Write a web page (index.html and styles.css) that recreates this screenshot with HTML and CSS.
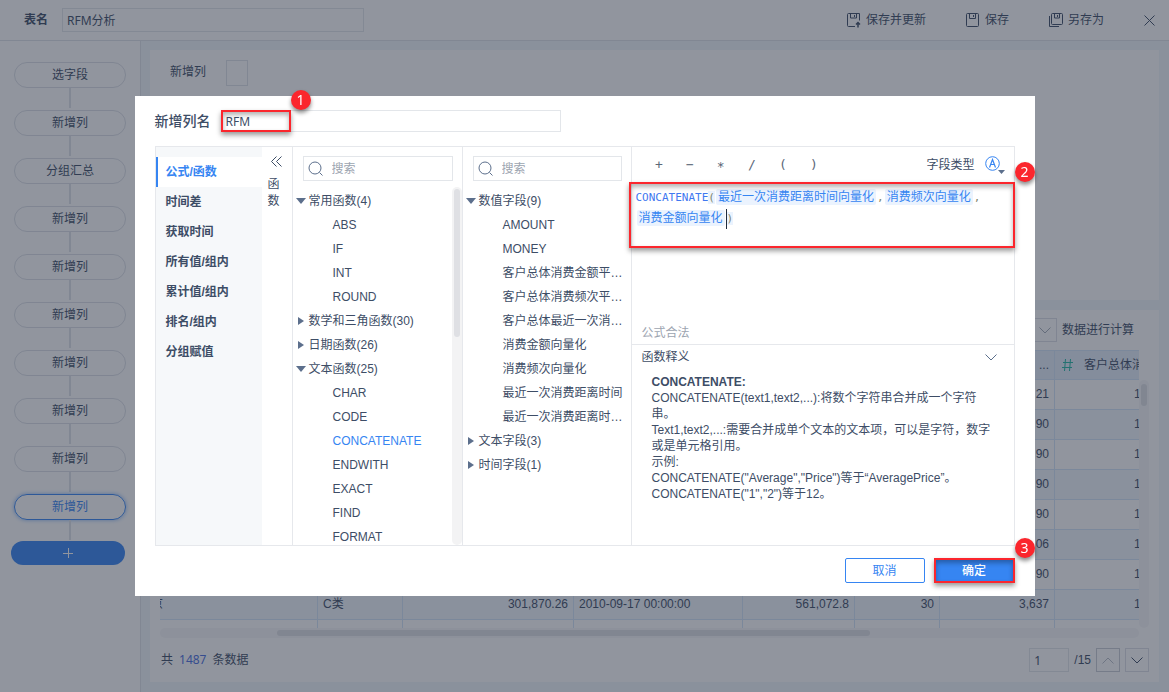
FILE: index.html
```html
<!DOCTYPE html>
<html lang="zh-CN">
<head>
    <meta charset="UTF-8">
    <meta name="viewport" content="width=device-width, initial-scale=1.0">
    <title>RFM分析</title>
    <link rel="stylesheet" href="styles.css">
</head>
<body>

<div class="app">
    <header class="topbar">
        <label class="topbar-label" for="tableName">表名</label>
        <input class="text-input table-name" type="text" id="tableName" value="RFM分析">
        <div class="topbar-actions">
            <button class="action" type="button">
                <svg width="14" height="15" viewBox="0 0 14 15" fill="none" stroke="currentColor"><path d="M8 13.500H1.500a1 1 0 0 1-1-1V1.500a1 1 0 0 1 1-1h11v7M3.500 .5v4.500h6V.5M7.500 2v2"/><path d="M11 14.500V10M9 11.500l2-2 2 2" stroke-width="1.500"/></svg>
                保存并更新
            </button>
            <button class="action" type="button">
                <svg width="14" height="15" viewBox="0 0 14 15" fill="none" stroke="currentColor"><rect x=".5" y=".5" width="12" height="13" rx="1"/><path d="M3.500 .5v5h6v-5M7.500 2v2"/></svg>
                保存
            </button>
            <button class="action" type="button">
                <svg width="14" height="15" viewBox="0 0 14 15" fill="none" stroke="currentColor"><rect x="2.500" y=".5" width="11" height="11" rx="1"/><path d="M5.500 .5v4.500h5V.5M8.500 2v2M.5 3v10.500H10"/></svg>
                另存为
            </button>
            <button class="action" type="button" aria-label="关闭">
                <svg width="11" height="11" viewBox="0 0 11 11" fill="none" stroke="currentColor"><path d="M.5 .5l10 10M10.500 .5l-10 10"/></svg>
            </button>
        </div>
    </header>

    <div class="workspace">
        <nav class="steps">
            <button class="step" type="button">选字段</button>
            <button class="step" type="button">新增列</button>
            <button class="step" type="button">分组汇总</button>
            <button class="step" type="button">新增列</button>
            <button class="step" type="button">新增列</button>
            <button class="step" type="button">新增列</button>
            <button class="step" type="button">新增列</button>
            <button class="step" type="button">新增列</button>
            <button class="step" type="button">新增列</button>
            <button class="step active" type="button">新增列</button>
            <button class="step-add" type="button" aria-label="添加">
                <svg width="10" height="10" viewBox="0 0 10 10" fill="none" stroke="currentColor"><path d="M5.500 0v10M0 5.500h10"/></svg>
            </button>
        </nav>

        <main class="content">
            <section class="panel column-panel">
                <span>新增列</span>
                <button class="column-box" type="button" aria-label="新增列"></button>
            </section>

            <section class="panel data-panel">
                <div class="data-toolbar">
                    <button class="row-count" type="button" aria-label="行数">
                        <svg width="12" height="7" viewBox="0 0 12 7" fill="none" stroke="currentColor"><path d="M.5 .5L6 6l5.500-5.500"/></svg>
                    </button>
                    <span>数据进行计算</span>
                </div>
                <div class="table-area">
                    <div class="table-view">
                        <table class="data-table">
                            <colgroup>
                                <col class="w-name"><col class="w-short"><col class="w-long"><col class="w-date"><col class="w-amount"><col class="w-short"><col class="w-total"><col class="w-last">
                            </colgroup>
                            <thead>
                                <tr><th></th><th></th><th></th><th></th><th></th><th></th><th class="num">...</th><th class="last"><svg width="11" height="12" viewBox="0 0 11 12" fill="none" stroke="currentColor"><path d="M3.500 0l-1 12M8.500 0l-1 12M1 3.500h10M0 8.500h10"/></svg>客户总体消费</th></tr>
                            </thead>
                            <tbody>
                                <tr><td></td><td></td><td></td><td></td><td></td><td></td><td class="num">21</td><td class="last">1</td></tr>
                                <tr><td></td><td></td><td></td><td></td><td></td><td></td><td class="num">90</td><td class="last">1</td></tr>
                                <tr><td></td><td></td><td></td><td></td><td></td><td></td><td class="num">90</td><td class="last">1</td></tr>
                                <tr><td></td><td></td><td></td><td></td><td></td><td></td><td class="num">90</td><td class="last">1</td></tr>
                                <tr><td></td><td></td><td></td><td></td><td></td><td></td><td class="num">90</td><td class="last">1</td></tr>
                                <tr><td></td><td></td><td></td><td></td><td></td><td></td><td class="num">06</td><td class="last">1</td></tr>
                                <tr><td></td><td></td><td></td><td></td><td></td><td></td><td class="num">90</td><td class="last">1</td></tr>
                                <tr><td class="cut">京</td><td>C类</td><td class="num">301,870.26</td><td>2010-09-17 00:00:00</td><td class="num">561,072.8</td><td class="num">30</td><td class="num">3,637</td><td class="last">1</td></tr>
                                <tr><td></td><td></td><td></td><td></td><td></td><td></td><td></td><td></td></tr>
                            </tbody>
                        </table>
                    </div>
                    <div class="scroll-y"><div class="thumb"></div></div>
                </div>
                <div class="scroll-x"><div class="thumb"></div></div>
                <div class="data-footer">
                    <p class="total">共<b>1487</b>条数据</p>
                    <input class="text-input page-input" type="text" value="1" aria-label="页码">
                    <span class="page-total">/15</span>
                    <button class="page-btn prev" type="button" aria-label="上一页">
                        <svg width="12" height="7" viewBox="0 0 12 7" fill="none" stroke="currentColor"><path d="M.5 6.500L6 1l5.500 5.500"/></svg>
                    </button>
                    <button class="page-btn" type="button" aria-label="下一页">
                        <svg width="12" height="7" viewBox="0 0 12 7" fill="none" stroke="currentColor"><path d="M.5 .5L6 6l5.500-5.500"/></svg>
                    </button>
                </div>
            </section>
        </main>
    </div>
</div>

<!-- Formula dialog -->
<div class="overlay">
    <div class="dialog" role="dialog" aria-modal="true">
        <div class="dialog-head">
            <label for="columnName">新增列名</label>
            <div class="name-field">
                <input class="text-input" type="text" id="columnName" value="RFM">
                <div class="mark mark-name"><span class="badge">1</span></div>
            </div>
        </div>

        <div class="dialog-body">
            <div class="tabs">
                <button class="tab active" type="button">公式/函数</button>
                <button class="tab" type="button">时间差</button>
                <button class="tab" type="button">获取时间</button>
                <button class="tab" type="button">所有值/组内</button>
                <button class="tab" type="button">累计值/组内</button>
                <button class="tab" type="button">排名/组内</button>
                <button class="tab" type="button">分组赋值</button>
            </div>

            <button class="collapse" type="button">
                <svg width="11" height="11" viewBox="0 0 11 11" fill="none" stroke="currentColor"><path d="M5.500 .5l-5 5 5 5M10.500 .5l-5 5 5 5"/></svg>
                <span>函数</span>
            </button>

            <div class="picker">
                <div class="search">
                    <svg width="16" height="16" viewBox="0 0 16 16" fill="none" stroke="currentColor"><circle cx="7" cy="7" r="6"/><path d="M11.500 11.500l3 3"/></svg>
                    <input type="text" placeholder="搜索" aria-label="搜索函数">
                </div>
                <div class="tree-area">
                    <ul class="tree">
                        <li><button class="group open" type="button">常用函数(4)</button></li>
                        <li><button class="leaf" type="button">ABS</button></li>
                        <li><button class="leaf" type="button">IF</button></li>
                        <li><button class="leaf" type="button">INT</button></li>
                        <li><button class="leaf" type="button">ROUND</button></li>
                        <li><button class="group" type="button">数学和三角函数(30)</button></li>
                        <li><button class="group" type="button">日期函数(26)</button></li>
                        <li><button class="group open" type="button">文本函数(25)</button></li>
                        <li><button class="leaf" type="button">CHAR</button></li>
                        <li><button class="leaf" type="button">CODE</button></li>
                        <li><button class="leaf selected" type="button">CONCATENATE</button></li>
                        <li><button class="leaf" type="button">ENDWITH</button></li>
                        <li><button class="leaf" type="button">EXACT</button></li>
                        <li><button class="leaf" type="button">FIND</button></li>
                        <li><button class="leaf" type="button">FORMAT</button></li>
                    </ul>
                    <div class="tree-scroll"><div class="thumb"></div></div>
                </div>
            </div>

            <div class="picker fields">
                <div class="search">
                    <svg width="16" height="16" viewBox="0 0 16 16" fill="none" stroke="currentColor"><circle cx="7" cy="7" r="6"/><path d="M11.500 11.500l3 3"/></svg>
                    <input type="text" placeholder="搜索" aria-label="搜索字段">
                </div>
                <div class="tree-area">
                    <ul class="tree">
                        <li><button class="group open" type="button">数值字段(9)</button></li>
                        <li><button class="leaf" type="button">AMOUNT</button></li>
                        <li><button class="leaf" type="button">MONEY</button></li>
                        <li><button class="leaf" type="button">客户总体消费金额平均值</button></li>
                        <li><button class="leaf" type="button">客户总体消费频次平均值</button></li>
                        <li><button class="leaf" type="button">客户总体最近一次消费距离</button></li>
                        <li><button class="leaf" type="button">消费金额向量化</button></li>
                        <li><button class="leaf" type="button">消费频次向量化</button></li>
                        <li><button class="leaf" type="button">最近一次消费距离时间</button></li>
                        <li><button class="leaf" type="button">最近一次消费距离时间向量化</button></li>
                        <li><button class="group" type="button">文本字段(3)</button></li>
                        <li><button class="group" type="button">时间字段(1)</button></li>
                    </ul>
                </div>
            </div>

            <div class="formula">
                <div class="operators">
                    <button class="op" type="button">+</button>
                    <button class="op" type="button">−</button>
                    <button class="op" type="button">∗</button>
                    <button class="op" type="button">/</button>
                    <button class="op" type="button">(</button>
                    <button class="op" type="button">)</button>
                    <span class="type-label">字段类型</span>
                    <button class="type-btn" type="button" aria-label="字段类型">
                        <svg width="20" height="18" viewBox="0 0 20 18" fill="none"><circle cx="7.500" cy="7.500" r="6.800" stroke="#3685f2"/><path d="M4.500 11.500l3-8 3 8M5.500 8.500h4" stroke="#3685f2" stroke-width="1.200"/><path d="M13 14h7l-3.500 4z" fill="#5c6f8c"/></svg>
                    </button>
                </div>
                <div class="editor-area">
                    <div class="editor" role="textbox" contenteditable="true" spellcheck="false"><span class="fn">CONCATENATE</span><span class="paren">(</span><span class="chip">最近一次消费距离时间向量化</span><span class="comma">,</span><span class="chip">消费频次向量化</span><span class="comma">,</span><br><span class="chip">消费金额向量化</span><span class="caret"></span><span class="paren">)</span></div>
                    <div class="mark mark-editor"><span class="badge">2</span></div>
                </div>
                <p class="status">公式合法</p>
                <div class="help">
                    <button class="help-head" type="button">
                        函数释义
                        <svg width="12" height="7" viewBox="0 0 12 7" fill="none" stroke="currentColor"><path d="M.5 .5L6 6l5.500-5.500"/></svg>
                    </button>
                    <div class="help-text">
                        <b>CONCATENATE:</b>
                        <p>CONCATENATE(text1,text2,...):将数个字符串合并成一个字符串。</p>
                        <p>Text1,text2,...:需要合并成单个文本的文本项，可以是字符，数字或是单元格引用。</p>
                        <p>示例:</p>
                        <p>CONCATENATE("Average","Price")等于“AveragePrice”。</p>
                        <p>CONCATENATE("1","2")等于12。</p>
                    </div>
                </div>
            </div>
        </div>

        <div class="dialog-foot">
            <button class="btn" type="button">取消</button>
            <div class="confirm">
                <button class="btn primary" type="button">确定</button>
                <div class="mark mark-ok"><span class="badge">3</span></div>
            </div>
        </div>
    </div>
</div>

</body>
</html>
```
FILE: styles.css
```css
* {
    box-sizing: border-box;
}
body {
    margin: 0;
    font-family: "Liberation Sans", "Noto Sans CJK SC", sans-serif;
    font-size: 12px;
    line-height: 16px;
    color: #3d4d66;
    overflow: hidden;
}
button, input {
    font: inherit;
    color: inherit;
    margin: 0;
    padding: 0;
    border: none;
    border-radius: 0;
    background: none;
    outline: none;
}
button {
    cursor: pointer;
}
svg {
    display: block;
    flex: none;
}
p, ul {
    margin: 0;
    padding: 0;
    list-style: none;
}
.text-input {
    border: 1px solid #e3e6ea;
    padding: 0 4px;
    font-family: "Noto Sans", "Noto Sans CJK SC", sans-serif;
}

/* Page */
.app {
    height: 100vh;
    display: flex;
    flex-direction: column;
}
.topbar {
    display: flex;
    align-items: center;
    height: 41px;
    padding: 0 14px 0 24px;
    border-bottom: 1px solid #dfe3e8;
}
.topbar-label {
    font-weight: bold;
}
.table-name {
    width: 302px;
    height: 24px;
    margin-left: 14px;
}
.topbar-actions {
    display: flex;
    gap: 40px;
    margin-left: auto;
}
.action {
    display: flex;
    align-items: center;
    gap: 5px;
}
.workspace {
    flex: 1;
    display: flex;
    min-height: 0;
}
.steps {
    flex: none;
    width: 141px;
    padding-top: 21px;
    border-right: 1px solid #dfe3e8;
    display: flex;
    flex-direction: column;
    align-items: center;
}
.step {
    width: 112px;
    height: 26px;
    border: 1px solid #dcdfe6;
    border-radius: 13px;
}
.step::after {
    content: "";
    display: block;
    width: 2px;
    height: 20px;
    margin: 5px auto -25px;
    background: #dfe2e8;
}
.step + .step {
    margin-top: 22px;
}
.step.active {
    border-color: #3685f2;
    color: #3685f2;
    box-shadow: 0 0 4px rgba(54, 133, 242, 0.6);
}
.step-add {
    display: flex;
    align-items: center;
    justify-content: center;
    width: 114px;
    height: 24px;
    margin: 21px 4px 0 0;
    border-radius: 12px;
    background: #3685f2;
    color: #fff;
}
.content {
    flex: 1;
    min-width: 0;
    display: flex;
    flex-direction: column;
    gap: 10px;
    padding: 9px 10px 10px 9px;
    background: #f0f6fb;
}
.panel {
    background: #fff;
}
.column-panel {
    height: 250px;
    padding: 10px 20px;
    display: flex;
    align-items: flex-start;
    gap: 20px;
    line-height: 24px;
}
.column-box {
    width: 22px;
    height: 26px;
    border: 1px solid #dfe3e8;
}
.data-panel {
    flex: 1;
    min-height: 0;
    display: flex;
    flex-direction: column;
    padding: 8px 10px 10px;
}
.data-toolbar {
    display: flex;
    align-items: center;
    justify-content: flex-end;
    gap: 5px;
    padding-right: 15px;
    margin-bottom: 8px;
}
.row-count {
    display: flex;
    align-items: center;
    justify-content: flex-end;
    width: 80px;
    height: 24px;
    padding-right: 5px;
    border: 1px solid #dcdfe6;
    color: #a5adb9;
}
.table-area {
    flex: 1;
    min-height: 0;
    display: flex;
}
.table-view {
    flex: 1;
    min-width: 0;
    overflow: hidden;
}
.data-table {
    width: 1100px;
    table-layout: fixed;
    border-collapse: separate;
    border-spacing: 0;
}
.w-name { width: 158px; }
.w-short { width: 85px; }
.w-long { width: 171px; }
.w-date { width: 169px; }
.w-amount { width: 112px; }
.w-total { width: 115px; }
.data-table th, .data-table td {
    height: 30px;
    padding: 0 5px 2px;
    border-right: 1px solid #d3e4f8;
    border-bottom: 1px solid #d3e4f8;
    text-align: left;
    font-weight: normal;
    white-space: nowrap;
    overflow: hidden;
}
.data-table th {
    padding-bottom: 0;
    background: #e4eefb;
    border-top: 1px solid #d3e4f8;
}
.data-table tr:nth-child(even) td {
    background: #f0f6fd;
}
.data-table .num {
    text-align: right;
}
.data-table .cut {
    text-indent: -14px;
}
.data-table td.last {
    padding-left: 79px;
}
.data-table th.last {
    padding-left: 29px;
}
.data-table th svg {
    float: left;
    margin: 2px 0 0 -22px;
    color: #25b8a5;
}
.thumb {
    border-radius: 3px;
    background: #dfe0e4;
}
.scroll-y {
    width: 10px;
    margin-top: 30px;
    padding: 4px 2px;
    border-radius: 5px;
    background: #f7f7f8;
}
.scroll-y .thumb {
    height: 22px;
}
.scroll-x {
    height: 10px;
    margin-right: 10px;
    padding: 2px 0;
    border-radius: 5px;
    background: #f7f7f8;
}
.scroll-x .thumb {
    width: 60.5%;
    height: 6px;
    margin-left: 12%;
}
.data-footer {
    display: flex;
    align-items: center;
    margin-top: 10px;
}
.total {
    margin-right: auto;
    padding-left: 1px;
    font-family: "Noto Sans", "Noto Sans CJK SC", sans-serif;
}
.total b {
    margin: 0 6px;
    font-weight: normal;
    color: #4a6fe0;
}
.page-input {
    width: 40px;
    height: 24px;
}
.page-total {
    margin: 0 5px;
}
.page-btn {
    display: flex;
    align-items: center;
    justify-content: center;
    width: 24px;
    height: 24px;
    border: 1px solid #dcdfe6;
}
.page-btn.prev {
    margin-right: 5px;
    border-color: #c8ccd4;
    color: #b8bec8;
}

/* Dialog */
.overlay {
    position: fixed;
    inset: 0;
    display: flex;
    align-items: center;
    justify-content: center;
    background: rgba(35, 43, 61, 0.5);
}
.dialog {
    width: 900px;
    height: 500px;
    padding: 14px 20px 13px;
    display: flex;
    flex-direction: column;
    background: #fff;
}
.dialog-head {
    display: flex;
    align-items: center;
    gap: 10px;
    margin-bottom: 14px;
    font-size: 14px;
}
.dialog-head label {
    font-weight: 500;
}
.name-field {
    position: relative;
    width: 340px;
    font-size: 12px;
}
.name-field .text-input {
    display: block;
    width: 100%;
    height: 22px;
}
.dialog-body {
    flex: 1;
    min-height: 0;
    display: flex;
    border: 1px solid #e6e8ec;
}
.tabs {
    width: 106px;
    padding-top: 10px;
    background: #f6f8fa;
}
.tab {
    display: block;
    width: 100%;
    height: 30px;
    padding-left: 8px;
    border-left: 2px solid transparent;
    text-align: left;
    font-weight: bold;
}
.tab.active {
    border-color: #3685f2;
    background: #fff;
    color: #3685f2;
}
.collapse {
    width: 30px;
    padding: 9px 10px 0 6px;
    display: flex;
    flex-direction: column;
    align-items: flex-end;
    gap: 9px;
}
.collapse span {
    width: 12px;
    margin-right: 2px;
    line-height: 17px;
}
.picker {
    width: 170px;
    border-left: 1px solid #e6e8ec;
    display: flex;
    flex-direction: column;
}
.picker.fields {
    width: 169px;
}
.search {
    display: flex;
    align-items: center;
    gap: 8px;
    height: 25px;
    margin: 9px 9px 6px 10px;
    padding: 0 4px;
    border: 1px solid #e3e6ea;
    color: #5c6f8c;
}
.search input {
    flex: 1;
    min-width: 0;
}
.search input::placeholder {
    color: #9ca4b0;
}
.tree-area {
    flex: 1;
    min-height: 0;
    display: flex;
}
.tree {
    flex: 1;
    min-width: 0;
    padding-top: 2px;
    overflow: hidden;
}
.fields .tree {
    margin-right: 7px;
}
.tree button {
    display: block;
    width: 100%;
    height: 24px;
    text-align: left;
    white-space: nowrap;
    overflow: hidden;
    text-overflow: ellipsis;
}
.tree .group::before {
    content: "";
    display: inline-block;
    margin: 0 5px 0 5px;
    border: 4px solid transparent;
    border-left: 6px solid #5c6f8c;
    border-right: none;
}
.tree .group.open::before {
    margin: 0 3px 1px 3px;
    border: 5px solid transparent;
    border-top: 6px solid #5c6f8c;
    border-bottom: none;
}
.tree .leaf {
    padding-left: 40px;
}
.tree .selected {
    color: #3685f2;
}
.tree-scroll {
    width: 10px;
    padding: 2px;
    border-radius: 5px;
    background: #f3f3f4;
}
.tree-scroll .thumb {
    height: 148px;
}
.formula {
    flex: 1;
    min-width: 0;
    border-left: 1px solid #e6e8ec;
    display: flex;
    flex-direction: column;
}
.operators {
    display: flex;
    align-items: center;
    height: 35px;
    padding: 0 9px 0 12px;
}
.op {
    width: 31px;
    font-family: "DejaVu Sans Mono", monospace;
    font-size: 13px;
    color: #5c6778;
}
.type-label {
    margin: 0 10px 0 auto;
}
.editor-area {
    position: relative;
    flex: 1;
}
.editor {
    padding: 5px 4px 0;
    line-height: 21px;
    outline: none;
}
.fn {
    font-family: "DejaVu Sans Mono", monospace;
    font-size: 11px;
    color: #3f78f0;
}
.paren, .comma {
    font-family: "DejaVu Sans Mono", monospace;
    font-size: 11px;
    color: #7f8670;
}
.paren {
    background: #ebf3fe;
}
.chip {
    display: inline-block;
    height: 16px;
    margin: 0 1px;
    padding: 0 2px;
    line-height: 16px;
    border-radius: 2px;
    background: #ebf3fe;
    color: #3685f2;
}
.caret {
    display: inline-block;
    width: 1px;
    height: 20px;
    vertical-align: middle;
    background: #1f2b3d;
}
.status {
    padding: 0 10px 3px;
    color: #9ca4b0;
}
.help {
    height: 201px;
    border-top: 1px solid #e6e8ec;
}
.help-head {
    display: flex;
    align-items: center;
    justify-content: space-between;
    width: 100%;
    height: 24px;
    padding: 0 17px 0 10px;
}
.help-head svg {
    color: #5c6f8c;
}
.help-text {
    padding: 5px 18px 0 20px;
}
.dialog-foot {
    display: flex;
    justify-content: flex-end;
    gap: 9px;
    padding-top: 12px;
}
.btn {
    display: block;
    width: 80px;
    height: 25px;
    border: 1px solid #3685f2;
    border-radius: 2px;
    color: #3685f2;
}
.confirm {
    position: relative;
}
.btn.primary {
    width: 81px;
    background: #3685f2;
    color: #fff;
    font-weight: 500;
}

/* Numbered callouts */
.mark {
    position: absolute;
    border: 2px solid #fb262d;
    box-shadow: 0 3px 5px rgba(0, 0, 0, 0.4), inset 0 3px 5px rgba(0, 0, 0, 0.3);
    pointer-events: none;
}
.mark-name {
    top: 0;
    left: 0;
    width: 70px;
    height: 22px;
}
.mark-editor {
    top: 0;
    left: -3px;
    right: -1px;
    height: 66px;
}
.mark-ok {
    inset: 0;
}
.badge {
    position: absolute;
    top: -22px;
    right: -22px;
    width: 20px;
    height: 20px;
    border-radius: 50%;
    background: #fb262d;
    box-shadow: 0 3px 4px rgba(0, 0, 0, 0.45);
    color: #fff;
    font-family: "Noto Sans", sans-serif;
    font-size: 14px;
    line-height: 20px;
    text-align: center;
}
```
